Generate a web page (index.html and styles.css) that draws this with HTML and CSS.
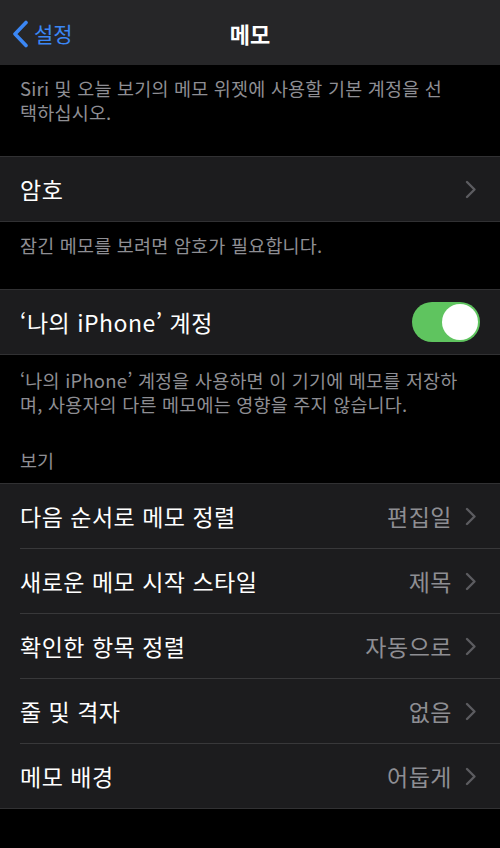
FILE: index.html
```html
<!DOCTYPE html>
<html lang="ko">
<head>
<meta charset="utf-8">
<title>메모</title>
<link rel="stylesheet" href="styles.css">
</head>
<body>
<div class="screen">
  <header class="nav">
    <div class="nav-back">
      <svg class="back-chev" width="18" height="28" viewBox="0 0 18 28"><path d="M15 2.5 L4 14 L15 25.5" fill="none" stroke="#3b87f5" stroke-width="3.6" stroke-linecap="round" stroke-linejoin="round"/></svg>
      <span class="back-label">설정</span>
    </div>
    <div class="nav-title">메모</div>
    <div class="nav-spacer"></div>
  </header>

  <p class="footnote first">Siri 및 오늘 보기의 메모 위젯에 사용할 기본 계정을 선<br>택하십시오.</p>

  <div class="group">
    <div class="cell">
      <span class="label">암호</span>
      <span class="accessory"><svg class="chev" width="12" height="19" viewBox="0 0 12 19"><path d="M2 2 L9.5 9.5 L2 17" fill="none" stroke="#5c5c60" stroke-width="2.4" stroke-linecap="round" stroke-linejoin="round"/></svg></span>
    </div>
  </div>

  <p class="footnote">잠긴 메모를 보려면 암호가 필요합니다.</p>

  <div class="group">
    <div class="cell">
      <span class="label">‘나의 iPhone’ 계정</span>
      <span class="toggle"><span class="knob"></span></span>
    </div>
  </div>

  <p class="footnote third">‘나의 iPhone’ 계정을 사용하면 이 기기에 메모를 저장하<br>며, 사용자의 다른 메모에는 영향을 주지 않습니다.</p>

  <p class="section-head">보기</p>

  <div class="group">
    <div class="cell">
      <span class="label">다음 순서로 메모 정렬</span>
      <span class="accessory"><span class="value">편집일</span><svg class="chev" width="12" height="19" viewBox="0 0 12 19"><path d="M2 2 L9.5 9.5 L2 17" fill="none" stroke="#5c5c60" stroke-width="2.4" stroke-linecap="round" stroke-linejoin="round"/></svg></span>
    </div>
    <div class="cell">
      <span class="label">새로운 메모 시작 스타일</span>
      <span class="accessory"><span class="value">제목</span><svg class="chev" width="12" height="19" viewBox="0 0 12 19"><path d="M2 2 L9.5 9.5 L2 17" fill="none" stroke="#5c5c60" stroke-width="2.4" stroke-linecap="round" stroke-linejoin="round"/></svg></span>
    </div>
    <div class="cell">
      <span class="label">확인한 항목 정렬</span>
      <span class="accessory"><span class="value">자동으로</span><svg class="chev" width="12" height="19" viewBox="0 0 12 19"><path d="M2 2 L9.5 9.5 L2 17" fill="none" stroke="#5c5c60" stroke-width="2.4" stroke-linecap="round" stroke-linejoin="round"/></svg></span>
    </div>
    <div class="cell">
      <span class="label">줄 및 격자</span>
      <span class="accessory"><span class="value">없음</span><svg class="chev" width="12" height="19" viewBox="0 0 12 19"><path d="M2 2 L9.5 9.5 L2 17" fill="none" stroke="#5c5c60" stroke-width="2.4" stroke-linecap="round" stroke-linejoin="round"/></svg></span>
    </div>
    <div class="cell">
      <span class="label">메모 배경</span>
      <span class="accessory"><span class="value">어둡게</span><svg class="chev" width="12" height="19" viewBox="0 0 12 19"><path d="M2 2 L9.5 9.5 L2 17" fill="none" stroke="#5c5c60" stroke-width="2.4" stroke-linecap="round" stroke-linejoin="round"/></svg></span>
    </div>
  </div>
</div>
</body>
</html>
```

FILE: styles.css
```css
* { box-sizing: border-box; }
html, body {
  margin: 0;
  padding: 0;
  background: #000;
}
body {
  font-family: "Noto Sans CJK KR", "Noto Sans", sans-serif;
  color: #fff;
  width: 500px;
  height: 848px;
  overflow: hidden;
}
.screen {
  width: 500px;
  min-height: 848px;
  background: #000;
}
.nav {
  height: 65px;
  background: #262628;
  display: grid;
  grid-template-columns: 1fr auto 1fr;
  align-items: center;
}
.nav-back {
  display: flex;
  align-items: center;
  padding-left: 11px;
  gap: 5px;
}
.back-chev { display: block; margin-top: 2px; }
.back-label {
  color: #3b87f5;
  font-size: 21px;
  line-height: 28px;
}
.nav-title {
  font-size: 22px;
  font-weight: 700;
  line-height: 28px;
}
.footnote {
  margin: 0;
  padding: 11px 20px 32px;
  font-size: 18.5px;
  letter-spacing: 0.2px;
  line-height: 24px;
  color: #8e8e93;
}
.footnote.third { padding-top: 13px; padding-bottom: 32px; }
.section-head {
  margin: 0;
  padding: 0 20px 11px;
  font-size: 18.5px;
  line-height: 24px;
  color: #8e8e93;
}
.group {
  background: #1c1c1e;
  border-top: 1px solid #313133;
  border-bottom: 1px solid #313133;
}
.cell {
  height: 64px;
  display: flex;
  align-items: center;
  justify-content: space-between;
  padding: 0 23px 0 20px;
  position: relative;
}
.cell + .cell {
  height: 65px;
  border-top: 1px solid #38383a;
  margin-left: 20px;
  padding-left: 0;
}
.label {
  font-size: 23px;
  letter-spacing: 0.5px;
  line-height: 30px;
  color: #fff;
}
.accessory {
  display: flex;
  align-items: center;
  gap: 13px;
}
.value {
  font-size: 23px;
  letter-spacing: 0.5px;
  line-height: 30px;
  color: #8e8e93;
}
.chev { display: block; }
.toggle {
  width: 68px;
  height: 40px;
  border-radius: 20px;
  background: #5fc45f;
  display: flex;
  justify-content: flex-end;
  align-items: center;
  padding: 2px;
  margin-right: -3px;
}
.knob {
  width: 36px;
  height: 36px;
  border-radius: 50%;
  background: #fff;
}
```
